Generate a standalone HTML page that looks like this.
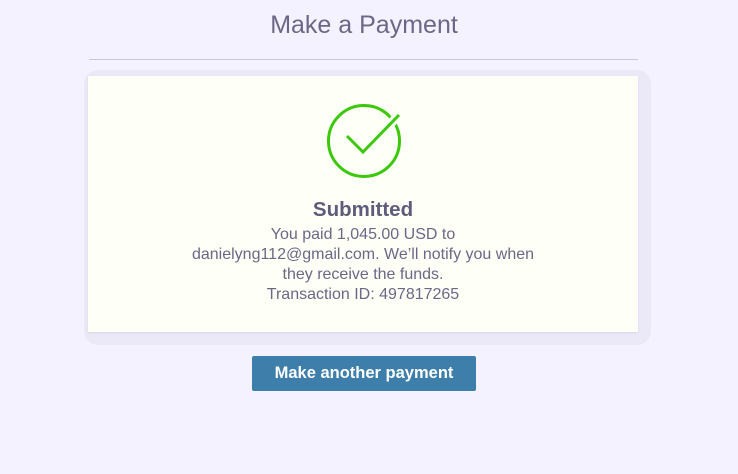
<!DOCTYPE html>
<html><head><style>
body{margin:0;background:#f5f2ff;font-family:"Liberation Sans",sans-serif;width:738px;height:474px;position:relative;overflow:hidden}
.t{position:absolute;top:11px;left:-5px;width:738px;text-align:center;font-size:25px;color:#6a6886}
.hr{position:absolute;top:59px;left:89px;width:549px;height:1px;background:#cbc7d6}
.sh{position:absolute;left:84px;top:70px;width:567px;height:275px;border-radius:14px;background:#ebe9f7}
.card{position:absolute;left:88px;top:76px;width:550px;height:256px;background:#fefff7;box-shadow:0 1px 2px rgba(0,0,0,.08)}
svg{position:absolute;left:322px;top:100px}
.h{position:absolute;top:198px;left:88px;width:550px;text-align:center;font-size:20.5px;font-weight:bold;color:#5d5c7a}
.p{position:absolute;top:225px;left:88px;width:550px;text-align:center;font-size:16px;line-height:20px;color:#6a6886}
.b{position:absolute;left:252px;top:356px;width:224px;height:35px;background:#3d7eaa;color:#fff;font-size:16.5px;font-weight:bold;text-align:center;line-height:34px;border-radius:2px}
</style></head><body>
<div class="t">Make a Payment</div>
<div class="hr"></div>
<div class="sh"></div>
<div class="card"></div>
<svg width="84" height="84" viewBox="322 100 84 84"><circle cx="364" cy="141" r="35.5" fill="none" stroke="#3cc80c" stroke-width="3"/><path d="M347 136 L363 152 L399 115" fill="none" stroke="#fefff7" stroke-width="9"/><path d="M347 136 L363 152 L399 115" fill="none" stroke="#3cc80c" stroke-width="3"/></svg>
<div class="h">Submitted</div>
<div class="p">You paid 1,045.00 USD to<br>danielyng112@gmail.com. We’ll notify you when<br>they receive the funds.<br>Transaction ID: 497817265</div>
<div class="b">Make another payment</div>
</body></html>
